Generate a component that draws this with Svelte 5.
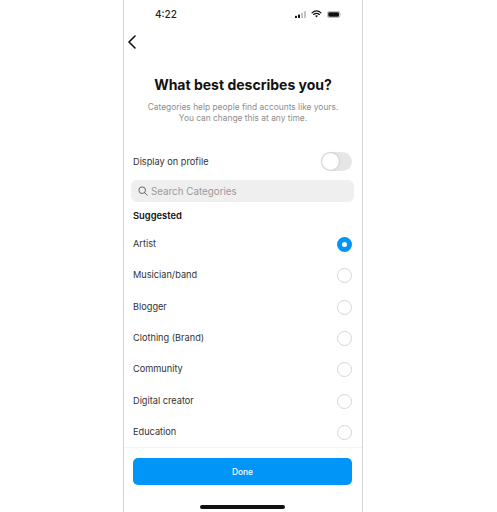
<script>
    const categories = ['Artist', 'Musician/band', 'Blogger', 'Clothing (Brand)', 'Community', 'Digital creator', 'Education'];
    let selected = 'Artist';
    let display = false;
</script>

<main class="page">
    <div class="phone">
        <div class="status">
            <span class="time">4:22</span>
            <div class="status-icons">
                <svg width="11" height="7" viewBox="0 0 11 7">
                    <rect x="0" y="4.8" width="2" height="2.2" rx="0.5" fill="#111" />
                    <rect x="3" y="3.4" width="2" height="3.6" rx="0.5" fill="#111" />
                    <rect x="6" y="1.8" width="2" height="5.2" rx="0.5" fill="#c4c4c4" />
                    <rect x="9" y="0" width="2" height="7" rx="0.5" fill="#c4c4c4" />
                </svg>
                <svg width="11" height="8" viewBox="0 0 12 9">
                    <path d="M1 3.2a7 7 0 0 1 10 0M2.8 5a4.5 4.5 0 0 1 6.4 0" fill="none" stroke="#111" stroke-width="1.4" stroke-linecap="round" />
                    <path d="M4.4 6.6a2.3 2.3 0 0 1 3.2 0L6 8.4z" fill="#111" />
                </svg>
                <svg width="15" height="7" viewBox="0 0 17 8">
                    <rect x="0.4" y="0.4" width="14.2" height="7.2" rx="2.2" fill="none" stroke="#999" stroke-width="0.8" />
                    <rect x="1.4" y="1.4" width="12.2" height="5.2" rx="1.3" fill="#111" />
                    <path d="M15.4 2.8c.7.2 1 .7 1 1.2s-.3 1-1 1.2z" fill="#aaa" />
                </svg>
            </div>
        </div>

        <button class="back" aria-label="Back">
            <svg width="10" height="14" viewBox="0 0 10 14">
                <path d="M8 1 2 7l6 6" fill="none" stroke="#111" stroke-width="1.6" stroke-linecap="round" stroke-linejoin="round" />
            </svg>
        </button>

        <h1>What best describes you?</h1>
        <p class="sub">Categories help people find accounts like yours.<br />You can change this at any time.</p>

        <div class="display-row">
            <span>Display on profile</span>
            <button class="toggle" class:on={display} aria-label="Display on profile" onclick={() => (display = !display)}>
                <span class="knob"></span>
            </button>
        </div>

        <div class="search">
            <svg width="10" height="10" viewBox="0 0 10 10">
                <circle cx="4.2" cy="4.2" r="3.3" fill="none" stroke="#666" stroke-width="1" />
                <path d="M6.7 6.7 9.2 9.2" stroke="#666" stroke-width="1" stroke-linecap="round" />
            </svg>
            <span>Search Categories</span>
        </div>

        <h2>Suggested</h2>

        <ul class="list">
            {#each categories as item}
                <li>
                    <span>{item}</span>
                    <button class="radio" class:checked={selected === item} aria-label={item} onclick={() => (selected = item)}></button>
                </li>
            {/each}
        </ul>

        <div class="footer">
            <button class="done">Done</button>
        </div>
        <div class="home-wrap"><div class="home"></div></div>
    </div>
</main>

<style>
    :global(body) {
        margin: 0;
        background: #fff;
    }

    .page {
        display: flex;
        justify-content: center;
        height: 512px;
        overflow: hidden;
        font-family: Inter, "Liberation Sans", sans-serif;
        color: #333;
    }

    .phone {
        box-sizing: border-box;
        width: 240px;
        height: 512px;
        margin-left: -11px;
        border: 1px solid #d4d4d4;
        border-top: none;
        border-bottom: none;
        display: flex;
        flex-direction: column;
        overflow: hidden;
    }

    .status {
        display: flex;
        justify-content: space-between;
        align-items: center;
        height: 28px;
        padding: 0 20px 0 31px;
    }

    .time {
        font-size: 10px;
        font-weight: 500;
        color: #222;
    }

    .status-icons {
        display: flex;
        align-items: center;
        gap: 5px;
    }

    .back {
        align-self: flex-start;
        display: flex;
        margin: 7px 0 0 3px;
        padding: 0;
        border: none;
        background: none;
    }

    h1 {
        margin: 26px 0 0;
        text-align: center;
        font-size: 14px;
        line-height: 20px;
        font-weight: 700;
        color: #111;
    }

    .sub {
        margin: 7px 0 0;
        text-align: center;
        font-size: 8.4px;
        line-height: 10.5px;
        color: #8e8e8e;
    }

    .display-row {
        display: flex;
        justify-content: space-between;
        align-items: center;
        margin: 28px 10px 0 9px;
        height: 20px;
        font-size: 9.2px;
    }

    .toggle {
        position: relative;
        width: 31px;
        height: 19px;
        padding: 0;
        border: none;
        border-radius: 10px;
        background: #e6e6e6;
    }

    .knob {
        position: absolute;
        left: 1px;
        top: 1px;
        width: 17px;
        height: 17px;
        border-radius: 50%;
        background: #fff;
        box-shadow: 0 0 2px rgba(0, 0, 0, 0.3);
    }

    .search {
        display: flex;
        align-items: center;
        gap: 3px;
        height: 22px;
        margin: 9px 8px 0 7px;
        padding-left: 7px;
        border-radius: 6px;
        background: #efefef;
        font-size: 9.8px;
        color: #9a9a9a;
    }

    h2 {
        margin: 8px 0 0 9px;
        font-size: 9.4px;
        line-height: 12px;
        font-weight: 600;
        color: #111;
    }

    .list {
        list-style: none;
        margin: 6px 10px 0 9px;
        padding: 0;
    }

    .list li {
        display: flex;
        justify-content: space-between;
        align-items: center;
        height: 31.33px;
        font-size: 9.2px;
    }

    .radio {
        box-sizing: border-box;
        width: 15px;
        height: 15px;
        margin-top: 2px;
        padding: 0;
        border: 1px solid #d6d6d6;
        border-radius: 50%;
        background: #fff;
    }

    .radio.checked {
        border: 5px solid #0095f6;
    }

    .footer {
        margin-top: 0;
        padding: 10px 10px 0 9px;
        border-top: 1px solid #f4f4f4;
    }

    .done {
        width: 100%;
        height: 27px;
        padding: 0;
        border: none;
        border-radius: 5px;
        background: #0095f6;
        color: #fff;
        font-family: inherit;
        font-size: 8.4px;
        font-weight: 500;
    }

    .home-wrap {
        display: flex;
        justify-content: center;
        margin-top: 20px;
        padding-right: 2px;
    }

    .home {
        width: 85px;
        height: 4px;
        border-radius: 2px;
        background: #111;
    }
</style>
